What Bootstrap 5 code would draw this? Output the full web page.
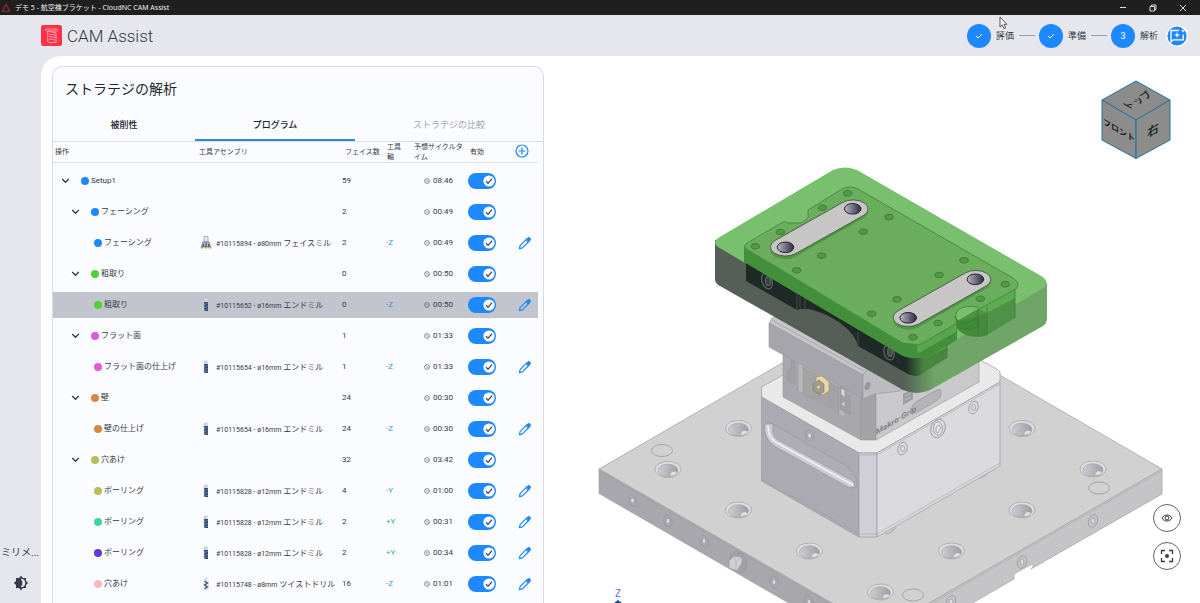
<!DOCTYPE html>
<html lang="ja">
<head>
<meta charset="utf-8">
<meta name="viewport" content="width=device-width, initial-scale=1">
<title>デモ 5 - 航空機ブラケット - CloudNC CAM Assist</title>
<link href="https://cdn.jsdelivr.net/npm/bootstrap@5.3.0/dist/css/bootstrap.min.css" rel="stylesheet">
<style>
  :root { --accent: #1e88ff; --ink: #353945; --line: #d8dce7; --shell: #e5e7ed; }
  body { font-family: Roboto, "Noto Sans CJK JP", sans-serif; color: var(--ink); background: var(--shell); font-size: 8px; line-height: 10px; }
  button { padding: 0; border: 0; background: none; color: inherit; }
  svg { display: block; flex: none; }
  .title-bar { height: 15px; background: #1f1f1f; color: #f2f2f2; font-family: "Noto Sans", "Noto Sans CJK JP", sans-serif; font-size: 7px; padding: 0 11px 0 1px; }
  .title-bar button { width: 10px; margin-left: 20px; }
  .app-header { height: 41px; padding: 0 12px 0 41px; }
  .app-name { font-size: 17px; line-height: 22px; font-weight: 300; color: #2f3440; margin-left: 5px; }
  .steps li { font-size: 9px; }
  .step-dot { width: 24px; height: 24px; border-radius: 50%; background: var(--accent); color: #fff; margin-right: 5px; }
  .step-rule { width: 16px; height: 1px; background: #9a9ea8; margin: 0 4px 0 5px; }
  .side-rail { width: 41px; padding-bottom: 12px; }
  .unit-label { font-size: 10px; line-height: 14px; padding-left: 1px; width: 41px; margin-bottom: 15px; white-space: nowrap; }
  .workspace { background: #fff; border-top-left-radius: 20px; padding: 10px 0 0 11px; }
  .ops-panel { width: 492px; background: #fbfcff; border: 1px solid var(--line); border-width: 1px 1px 0; border-radius: 10px 10px 0 0; }
  .ops-panel h1 { font-size: 14px; line-height: 20px; margin: 12px 12px 11px; font-weight: 400; color: #23262f; }
  .op-tabs { border-bottom: 1px solid var(--line); }
  .op-tabs button { height: 31px; font-size: 9px; font-weight: 500; color: #1d2029; border-bottom: 2px solid transparent; }
  .op-tabs .t1 { flex: 142; } .op-tabs .t2 { flex: 160; } .op-tabs .t3 { flex: 188; font-weight: 400; color: #a3a5ac; }
  .op-tabs .current { border-bottom-color: #2b87f0; }
  .ops-scroll { padding-right: 5px; }
  .ops { table-layout: fixed; width: 100%; border-collapse: separate; border-spacing: 0 5px; margin-top: -5px; }
  .ops th { height: 21px; padding: 0 0 0 6px; font-size: 7px; font-weight: 400; border-bottom: 1px solid var(--line); vertical-align: middle; }
  .ops th:first-child { padding-left: 2px; } .ops th:nth-child(2) { padding-left: 2px; }
  .ops th:nth-child(4) { padding-right: 6px; } .ops th:nth-child(5) { padding-left: 5px; }
  .ops td { height: 26px; padding: 0 0 0 3px; vertical-align: middle; white-space: nowrap; }
  .ops .picked td { background: #c3c5ce; }
  .lv0 { padding-left: 5px; } .lv1 { padding-left: 15px; } .lv2 { padding-left: 38px; }
  .twist { width: 9px; margin-right: 11px; }
  .dot { width: 8px; height: 8px; border-radius: 50%; margin-right: 2px; flex: none; }
  .tool { gap: 4px; padding-top: 1px; }
  .tool svg { margin-top: -2px; }
  .tool-code { font-size: 7px; margin-right: -2px; }
  .ops td.ax { padding-left: 5px; color: #3b8cf0; } .ops td.ax.y { color: #2fb67c; }
  .ops td.tm { padding-right: 11px; }
  .tm div { gap: 3px; }
  .form-check-input.op-switch { display: block; width: 28px; height: 16px; margin: 0 0 0 1px; border: 0; border-radius: 8px; background: #b9bdc8; }
  .form-check-input.op-switch:checked { background: var(--accent) url("data:image/svg+xml,%3Csvg xmlns='http://www.w3.org/2000/svg' viewBox='0 0 28 16'%3E%3Ccircle cx='21' cy='8' r='5.6' fill='%23fff'/%3E%3Cpath d='M18 8.2l2 2.1 4-4.6' fill='none' stroke='%2323406e' stroke-width='1.2'/%3E%3C/svg%3E") no-repeat center / 28px 16px; }
  .edit { display: block; margin-left: 6px; color: var(--accent); }
  .viewer svg.scene { width: 100%; height: 100%; }
  .view-cube { top: 14px; right: 29px; }
  .view-tools { right: 19px; bottom: 33px; gap: 10px; }
  .view-tools button { width: 28px; height: 28px; border-radius: 50%; border: 1px solid #5d626e; background: #fff; color: #353b4a; }
  .pointer { left: 999px; top: 16px; }
</style>
</head>
<body class="vh-100 overflow-hidden d-flex flex-column">

<svg width="0" height="0" class="position-absolute" aria-hidden="true">
  <symbol id="chev" viewBox="0 0 9 6"><path d="M1.2 1l3.3 3.3L7.8 1" fill="none" stroke="#343948" stroke-width="1.3"/></symbol>
  <symbol id="clock" viewBox="0 0 6 6"><circle cx="3" cy="3" r="2.400" fill="none" stroke="#5a5f6b" stroke-width=".7"/><path d="M1.600 1.800L3 3.200h1.400" fill="none" stroke="#5a5f6b" stroke-width=".6"/></symbol>
  <symbol id="pen" viewBox="0 0 14 14"><path d="M1.400 12.600l.7-3L9 2.700l2.300 2.300-6.900 6.900zM8 3.700L10.300 6" fill="none" stroke="currentColor" stroke-width="1.200" stroke-linejoin="round"/><path d="M9 2.700l1.100-1.100c.9-.9 3.200 1.400 2.300 2.300L11.300 5z" fill="currentColor" stroke="currentColor"/></symbol>
  <symbol id="endmill" viewBox="0 0 12 13"><path d="M4.200.5h3.600v4H4.200z" fill="#cfd5df"/><path d="M4 4h4v9H4z" fill="#2e4468"/><path d="M4 7l4-2M4 10l4-2M4 12.700l4-2" stroke="#7f90ab" stroke-width=".8"/><path d="M4 1v12" stroke="#b8c0cc" stroke-width=".6"/></symbol>
  <symbol id="drill" viewBox="0 0 12 13"><path d="M4.200.5h3.600v3H4.200z" fill="#dde1e8"/><path d="M4.500 4L7.500 6l-3 2 3 2-3 1.800" fill="none" stroke="#2e4468" stroke-width="1.300"/><path d="M4 3v9l2 1 2-1V3" fill="none" stroke="#a5b0c2" stroke-width=".5"/></symbol>
  <symbol id="facemill" viewBox="0 0 12 13"><path d="M4 .5h4V6H4z" fill="#e6e9ee" stroke="#8490a5" stroke-width=".7"/><path d="M3 6h6l1.500 5h-9z" fill="#b6bfce" stroke="#526584" stroke-width=".7"/><path d="M6 7v5M3.500 8L3 11M8.500 8l.5 3" stroke="#263b5c"/><path d="M.6 11.700h2.600M4.800 11.700h2.400M8.800 11.700h2.600" stroke="#d3ae2d" stroke-width="1.400"/></symbol>
  <symbol id="tick" viewBox="0 0 8 6"><path d="M1 3l2 2 4-4" fill="none" stroke="#fff" stroke-width="1"/></symbol>
</svg>

<div class="title-bar d-flex align-items-center flex-shrink-0">
  <svg width="10" height="10" viewBox="0 0 10 10" class="me-1"><path d="M5 1.200L8.800 8.300H1.200z" fill="none" stroke="#7a2731" stroke-width="1.500" stroke-linejoin="round"/></svg>
  <span class="me-auto">デモ 5 - 航空機ブラケット - CloudNC CAM Assist</span>
  <button type="button" aria-label="最小化"><svg width="8" height="8"><path d="M1 3.500h6" stroke="#ddd"/></svg></button>
  <button type="button" aria-label="元に戻す"><svg width="8" height="8"><path d="M1 2.500h4.500V7H1zM2.500 2.500V1H7v4.500H5.500" fill="none" stroke="#ddd"/></svg></button>
  <button type="button" aria-label="閉じる"><svg width="8" height="8"><path d="M1 1l6 6M7 1L1 7" stroke="#ddd"/></svg></button>
</div>

<header class="app-header d-flex align-items-center flex-shrink-0">
  <svg width="21" height="21" viewBox="0 0 21 21"><rect width="21" height="21" rx="2.500" fill="#fb3349"/><path d="M5.500 4h10c1.500 0 1.500 2 0 2h-9c-2.500 0-2.500-2-1-2zM6.800 6v10.500M8 6.200l7 1.800v9.500H8.500c-1.700 0-2-1.200-1.700-2M8 9.200l7 1M8 11.500l7 1M8 14l6 1" fill="none" stroke="#ff9da8" stroke-width="1"/></svg>
  <span class="app-name me-auto">CAM Assist</span>
  <ol class="steps list-unstyled d-flex align-items-center mb-0">
    <li class="d-flex align-items-center"><span class="step-dot d-flex align-items-center justify-content-center"><svg width="8" height="6"><use href="#tick"/></svg></span>評価<span class="step-rule"></span></li>
    <li class="d-flex align-items-center"><span class="step-dot d-flex align-items-center justify-content-center"><svg width="8" height="6"><use href="#tick"/></svg></span>準備<span class="step-rule"></span></li>
    <li class="d-flex align-items-center"><span class="step-dot d-flex align-items-center justify-content-center">3</span>解析</li>
  </ol>
  <button type="button" class="ms-2" aria-label="フィードバック"><svg width="22" height="22" viewBox="0 0 22 22"><circle cx="11" cy="11" r="10.200" fill="var(--accent)" stroke="#fff" stroke-width="1.200"/><path d="M13 5.500H5v11.500l2.200-2.200h10V9.500" fill="none" stroke="#fff" stroke-width="1.300"/><path d="M11 7l.8 2.200 2.200.8-2.200.8-.8 2.200-.8-2.200L8 10l2.200-.8zM17 3.800l.6 1.400 1.400.6-1.400.6-.6 1.400-.6-1.400-1.400-.6 1.400-.6z" fill="#fff"/></svg></button>
</header>
<svg class="pointer position-absolute" width="9" height="14" viewBox="0 0 9 14" aria-hidden="true"><path d="M1 1v10l2.300-2.200L5 12.700l1.700-.7-1.600-3.700H8z" fill="#fff" stroke="#333" stroke-width=".8"/></svg>

<div class="d-flex flex-grow-1 overflow-hidden">
  <aside class="side-rail d-flex flex-column justify-content-end align-items-center flex-shrink-0">
    <div class="unit-label">ミリメ...</div>
    <button type="button" aria-label="テーマ"><svg width="16" height="16" viewBox="0 0 16 16"><path d="M8 .8l2 2.300h3v3L15.200 8 13 10v3h-3l-2 2.200L6 13H3v-3L.8 8 3 6V3.100h3z" fill="#363c4b"/><path d="M8 4a4 4 0 0 1 0 8c2.200-2 2.200-6 0-8z" fill="#e5e7ed" stroke="#e5e7ed" stroke-width=".6"/></svg></button>
  </aside>

  <main class="workspace d-flex flex-grow-1 overflow-hidden">
    <section class="ops-panel flex-shrink-0">
      <h1>ストラテジの解析</h1>
      <nav class="op-tabs d-flex">
        <button type="button" class="t1">被削性</button><button type="button" class="t2 current" aria-current="page">プログラム</button><button type="button" class="t3">ストラテジの比較</button>
      </nav>
      <div class="ops-scroll">
      <table class="ops">
        <colgroup><col style="width:144px"><col style="width:142px"><col style="width:42px"><col style="width:28px"><col style="width:55px"><col style="width:45px"><col></colgroup>
        <thead><tr><th>操作</th><th>工具アセンブリ</th><th>フェイス数</th><th>工具軸</th><th>予想サイクルタイム</th><th>有効</th><th><button type="button" aria-label="追加"><svg width="14" height="14" viewBox="0 0 14 14"><path d="M7 3.500v7M3.500 7h7M13 7A6 6 0 1 1 1 7a6 6 0 0 1 12 0z" fill="none" stroke="#1e88ff" stroke-width="1.200"/></svg></button></th></tr></thead>
        <tbody>
        <tr><td><div class="lv0 d-flex align-items-center"><button type="button" class="twist" aria-label="折りたたむ"><svg width="9" height="6"><use href="#chev"/></svg></button><span class="dot" style="background:#1e88ff"></span>Setup1</div></td><td></td><td>59</td><td></td><td class="tm"><div class="d-flex align-items-center justify-content-end"><svg width="6" height="6"><use href="#clock"/></svg>08:46</div></td><td><input type="checkbox" role="switch" class="form-check-input op-switch" aria-label="有効" checked></td><td></td></tr>
        <tr><td><div class="lv1 d-flex align-items-center"><button type="button" class="twist" aria-label="折りたたむ"><svg width="9" height="6"><use href="#chev"/></svg></button><span class="dot" style="background:#1e88ff"></span>フェーシング</div></td><td></td><td>2</td><td></td><td class="tm"><div class="d-flex align-items-center justify-content-end"><svg width="6" height="6"><use href="#clock"/></svg>00:49</div></td><td><input type="checkbox" role="switch" class="form-check-input op-switch" aria-label="有効" checked></td><td></td></tr>
        <tr><td><div class="lv2 d-flex align-items-center"><span class="dot" style="background:#1e88ff"></span>フェーシング</div></td><td><div class="tool d-flex align-items-center"><svg width="12" height="13"><use href="#facemill"/></svg><span class="tool-code">#10115894 - ø80mm</span> フェイスミル</div></td><td>2</td><td class="ax">-Z</td><td class="tm"><div class="d-flex align-items-center justify-content-end"><svg width="6" height="6"><use href="#clock"/></svg>00:49</div></td><td><input type="checkbox" role="switch" class="form-check-input op-switch" aria-label="有効" checked></td><td><button type="button" class="edit" aria-label="編集"><svg width="14" height="14"><use href="#pen"/></svg></button></td></tr>
        <tr><td><div class="lv1 d-flex align-items-center"><button type="button" class="twist" aria-label="折りたたむ"><svg width="9" height="6"><use href="#chev"/></svg></button><span class="dot" style="background:#4cd335"></span>粗取り</div></td><td></td><td>0</td><td></td><td class="tm"><div class="d-flex align-items-center justify-content-end"><svg width="6" height="6"><use href="#clock"/></svg>00:50</div></td><td><input type="checkbox" role="switch" class="form-check-input op-switch" aria-label="有効" checked></td><td></td></tr>
        <tr class="picked"><td><div class="lv2 d-flex align-items-center"><span class="dot" style="background:#4cd335"></span>粗取り</div></td><td><div class="tool d-flex align-items-center"><svg width="12" height="13"><use href="#endmill"/></svg><span class="tool-code">#10115652 - ø16mm</span> エンドミル</div></td><td>0</td><td class="ax">-Z</td><td class="tm"><div class="d-flex align-items-center justify-content-end"><svg width="6" height="6"><use href="#clock"/></svg>00:50</div></td><td><input type="checkbox" role="switch" class="form-check-input op-switch" aria-label="有効" checked></td><td><button type="button" class="edit" aria-label="編集"><svg width="14" height="14"><use href="#pen"/></svg></button></td></tr>
        <tr><td><div class="lv1 d-flex align-items-center"><button type="button" class="twist" aria-label="折りたたむ"><svg width="9" height="6"><use href="#chev"/></svg></button><span class="dot" style="background:#df5bdc"></span>フラット面</div></td><td></td><td>1</td><td></td><td class="tm"><div class="d-flex align-items-center justify-content-end"><svg width="6" height="6"><use href="#clock"/></svg>01:33</div></td><td><input type="checkbox" role="switch" class="form-check-input op-switch" aria-label="有効" checked></td><td></td></tr>
        <tr><td><div class="lv2 d-flex align-items-center"><span class="dot" style="background:#df5bdc"></span>フラット面の仕上げ</div></td><td><div class="tool d-flex align-items-center"><svg width="12" height="13"><use href="#endmill"/></svg><span class="tool-code">#10115654 - ø16mm</span> エンドミル</div></td><td>1</td><td class="ax">-Z</td><td class="tm"><div class="d-flex align-items-center justify-content-end"><svg width="6" height="6"><use href="#clock"/></svg>01:33</div></td><td><input type="checkbox" role="switch" class="form-check-input op-switch" aria-label="有効" checked></td><td><button type="button" class="edit" aria-label="編集"><svg width="14" height="14"><use href="#pen"/></svg></button></td></tr>
        <tr><td><div class="lv1 d-flex align-items-center"><button type="button" class="twist" aria-label="折りたたむ"><svg width="9" height="6"><use href="#chev"/></svg></button><span class="dot" style="background:#d68a40"></span>壁</div></td><td></td><td>24</td><td></td><td class="tm"><div class="d-flex align-items-center justify-content-end"><svg width="6" height="6"><use href="#clock"/></svg>00:30</div></td><td><input type="checkbox" role="switch" class="form-check-input op-switch" aria-label="有効" checked></td><td></td></tr>
        <tr><td><div class="lv2 d-flex align-items-center"><span class="dot" style="background:#d68a40"></span>壁の仕上げ</div></td><td><div class="tool d-flex align-items-center"><svg width="12" height="13"><use href="#endmill"/></svg><span class="tool-code">#10115654 - ø16mm</span> エンドミル</div></td><td>24</td><td class="ax">-Z</td><td class="tm"><div class="d-flex align-items-center justify-content-end"><svg width="6" height="6"><use href="#clock"/></svg>00:30</div></td><td><input type="checkbox" role="switch" class="form-check-input op-switch" aria-label="有効" checked></td><td><button type="button" class="edit" aria-label="編集"><svg width="14" height="14"><use href="#pen"/></svg></button></td></tr>
        <tr><td><div class="lv1 d-flex align-items-center"><button type="button" class="twist" aria-label="折りたたむ"><svg width="9" height="6"><use href="#chev"/></svg></button><span class="dot" style="background:#b9bd5c"></span>穴あけ</div></td><td></td><td>32</td><td></td><td class="tm"><div class="d-flex align-items-center justify-content-end"><svg width="6" height="6"><use href="#clock"/></svg>03:42</div></td><td><input type="checkbox" role="switch" class="form-check-input op-switch" aria-label="有効" checked></td><td></td></tr>
        <tr><td><div class="lv2 d-flex align-items-center"><span class="dot" style="background:#b9bd5c"></span>ボーリング</div></td><td><div class="tool d-flex align-items-center"><svg width="12" height="13"><use href="#endmill"/></svg><span class="tool-code">#10115828 - ø12mm</span> エンドミル</div></td><td>4</td><td class="ax y">-Y</td><td class="tm"><div class="d-flex align-items-center justify-content-end"><svg width="6" height="6"><use href="#clock"/></svg>01:00</div></td><td><input type="checkbox" role="switch" class="form-check-input op-switch" aria-label="有効" checked></td><td><button type="button" class="edit" aria-label="編集"><svg width="14" height="14"><use href="#pen"/></svg></button></td></tr>
        <tr><td><div class="lv2 d-flex align-items-center"><span class="dot" style="background:#40d6a0"></span>ボーリング</div></td><td><div class="tool d-flex align-items-center"><svg width="12" height="13"><use href="#endmill"/></svg><span class="tool-code">#10115828 - ø12mm</span> エンドミル</div></td><td>2</td><td class="ax y">+Y</td><td class="tm"><div class="d-flex align-items-center justify-content-end"><svg width="6" height="6"><use href="#clock"/></svg>00:31</div></td><td><input type="checkbox" role="switch" class="form-check-input op-switch" aria-label="有効" checked></td><td><button type="button" class="edit" aria-label="編集"><svg width="14" height="14"><use href="#pen"/></svg></button></td></tr>
        <tr><td><div class="lv2 d-flex align-items-center"><span class="dot" style="background:#5c3bd6"></span>ボーリング</div></td><td><div class="tool d-flex align-items-center"><svg width="12" height="13"><use href="#endmill"/></svg><span class="tool-code">#10115828 - ø12mm</span> エンドミル</div></td><td>2</td><td class="ax y">+Y</td><td class="tm"><div class="d-flex align-items-center justify-content-end"><svg width="6" height="6"><use href="#clock"/></svg>00:34</div></td><td><input type="checkbox" role="switch" class="form-check-input op-switch" aria-label="有効" checked></td><td><button type="button" class="edit" aria-label="編集"><svg width="14" height="14"><use href="#pen"/></svg></button></td></tr>
        <tr><td><div class="lv2 d-flex align-items-center"><span class="dot" style="background:#f2bcc0"></span>穴あけ</div></td><td><div class="tool d-flex align-items-center"><svg width="12" height="13"><use href="#drill"/></svg><span class="tool-code">#10115748 - ø8mm</span> ツイストドリル</div></td><td>16</td><td class="ax">-Z</td><td class="tm"><div class="d-flex align-items-center justify-content-end"><svg width="6" height="6"><use href="#clock"/></svg>01:01</div></td><td><input type="checkbox" role="switch" class="form-check-input op-switch" aria-label="有効" checked></td><td><button type="button" class="edit" aria-label="編集"><svg width="14" height="14"><use href="#pen"/></svg></button></td></tr>
        </tbody>
      </table>
      </div>
    </section>

    <section class="viewer position-relative flex-grow-1 overflow-hidden">
      <svg class="scene" viewBox="544 66 656 537" preserveAspectRatio="xMidYMid slice">
        <defs>
          <linearGradient id="bore"><stop offset="0" stop-color="#b8b7c8"/><stop offset="1" stop-color="#2c2b45"/></linearGradient>
          <linearGradient id="pit"><stop offset="0" stop-color="#cdcdd4"/><stop offset="1" stop-color="#9c9ca5"/></linearGradient>
          <linearGradient id="rim" x1="903" x2="935" gradientUnits="userSpaceOnUse"><stop offset="0" stop-color="#555f57"/><stop offset="1" stop-color="#70a468"/></linearGradient>
          <linearGradient id="nook" x1="906" x2="924" gradientUnits="userSpaceOnUse"><stop offset="0" stop-color="#1f2a28"/><stop offset="1" stop-color="#47873f"/></linearGradient>
          <g id="socket"><ellipse rx="13" ry="8" fill="#dedee2" stroke="#9d9da0" stroke-width=".7"/><ellipse cy="1" rx="10" ry="6.300" fill="url(#pit)" stroke="#9d9da0" stroke-width=".6"/><path d="M2 6.500c0-4 4-6 7-3.500-1 2-3 3.500-7 3.500z" fill="#e1e1e4" stroke="#aaa" stroke-width=".4"/></g>
          <g id="bolt" fill="none" stroke="#939398" stroke-width=".6"><ellipse rx="4" ry="6" transform="rotate(-20)"/><ellipse rx="1.800" ry="2.500" fill="#ddd"/></g>
          <g id="boltr" fill="none" stroke="#98989c" stroke-width=".8"><ellipse rx="4.500" ry="6.500" transform="rotate(20)"/><ellipse rx="2" ry="3" fill="#ddd"/></g>
          <ellipse id="pin" rx="4.200" ry="2.700"/>
          <g id="slot"><path d="M775 243L842.700 205 863.500 218 796 256.500A15 9 0 0 1 770.500 250z" fill="#4e9944"/><path d="M863.300 215.600A15 9 0 0 0 868 209v3.500q-1 4-4.700 6z" fill="#4e9944"/><path d="M775.200 240.400L842.700 202.400A15 9 0 0 1 863.300 215.600L795.800 253.600A15 9 0 0 1 775.200 240.400z" fill="#c7c5c5" stroke="#3b4a39" stroke-width=".8"/><ellipse cx="785.500" cy="247.300" rx="8.300" ry="5.300" fill="url(#bore)" stroke="#222"/><ellipse cx="852.700" cy="208.800" rx="8.300" ry="5.300" fill="url(#bore)" stroke="#222"/></g>
        </defs>
        <!-- base plate -->
        <g stroke="#a8a8aa" stroke-width=".8" stroke-linejoin="round">
          <path d="M599 469L880.500 306 1162 469 880.500 631z" fill="#d1d1d1"/>
          <path d="M599 469L880.500 631v25L599 493.500z" fill="#a8a7ad"/>
          <path d="M1162 469L880.500 631v25L1014 579v-5l17-9.500 3 1-3 3.500 131-75z" fill="#c5c5c8"/>
          <path d="M599 471L880.500 633 1162 471" fill="none" stroke="#999" stroke-width=".4"/>
          <g fill="none" stroke="#9b9b9d"><ellipse cx="662" cy="450.500" rx="10.500" ry="6"/><ellipse cx="1099" cy="488" rx="10.500" ry="6"/><ellipse cx="913" cy="595" rx="10.500" ry="6"/></g>
        </g>
        <use href="#socket" x="738.500" y="428.500"/><use href="#socket" x="668" y="469.500"/><use href="#socket" x="738.500" y="510"/><use href="#socket" x="809.500" y="551"/><use href="#socket" x="880.500" y="592"/><use href="#socket" x="1022" y="428.500"/><use href="#socket" x="1093" y="469"/><use href="#socket" x="1022" y="510"/><use href="#socket" x="951.500" y="551"/>
        <use href="#bolt" x="632.500" y="500.500"/><use href="#bolt" x="668" y="521"/><use href="#bolt" x="704" y="541"/><use href="#bolt" x="774" y="582"/><use href="#bolt" x="809" y="602"/>
        <use href="#boltr" x="1093" y="521"/><use href="#boltr" x="1022" y="562"/><use href="#boltr" x="951" y="602"/>
        <ellipse cx="738.500" cy="562" rx="8" ry="11" transform="rotate(-25 738.500 562)" fill="#a2a1a7" stroke="#939398" stroke-width=".6"/>
        <path d="M729 561l5-5 8 1v6l-5 8-8-3z" fill="#d0d0d4" stroke="#939398" stroke-width=".6"/><path d="M734 556l2 6 6-5M736 562v8" fill="none" stroke="#a5a5a9" stroke-width=".6"/>
        <!-- vise body -->
        <path d="M979 478q6 0 10-7M885 534q8 0 11-7" fill="#c2c2c5" stroke="#a3a3a3" stroke-width=".7"/>
        <g stroke="#9c9ca1" stroke-width=".7" stroke-linejoin="round">
          <path d="M761.500 387L783 375 880 340 980 360 997 369 1000 372v10L877 453h-18L761.500 397z" fill="#e9e9e9"/>
          <path d="M761.500 397L859 453v84L761.500 481z" fill="#abaab3"/>
          <path d="M859 453h18v84h-18z" fill="#cfced9"/>
          <path d="M877 453L1000 382v84L877 537z" fill="#dad9de"/>
          <path d="M761.500 479L859 534h18L1000 463M859 455h18L1000 384" fill="none" stroke-width=".5"/>
        </g>
        <path d="M764 428c0-6 4-7 9-4l70 40c9 5 14 13 14 19 0 5-4 6-8 4l-76-43c-6-4-9-10-9-16z" fill="#aeadb6" stroke="#97979f" stroke-width=".7"/>
        <path d="M765 424c-2 10 3 18 11 23l72 40c7 2 8-2 5-6l-73-40c-7-3-8-8-7-17z" fill="#cdccd5" stroke="#94949b" stroke-width=".6"/>
        <path d="M768 426c0 9 4 15 11 18l74 41" fill="none" stroke="#f0f0f4" stroke-width="1.500"/>
        <use href="#bolt" x="809.500" y="435.500"/>
        <use href="#boltr" x="902.500" y="448.500"/><use href="#boltr" x="973.500" y="407.500"/>
        <g fill="none" stroke="#96969b" stroke-width=".8"><ellipse cx="938" cy="428.500" rx="7" ry="9.500" transform="rotate(20 938 428.500)"/><ellipse cx="938" cy="428.500" rx="4.500" ry="6.500" fill="#e6e6e9"/><path d="M936 427l3-2 2 3-3 5-2-1z"/></g>
        <!-- vise carriage -->
        <g stroke="#97979c" stroke-width=".6" stroke-linejoin="round">
          <path d="M783 350l78 40v50L783 397z" fill="#a8a7ad"/>
          <path d="M861 385h15v55h-15z" fill="#a2a3a5"/>
          <path d="M876 385l103-40v37L876 440z" fill="#c9c9cc"/>
          <path d="M798 362l47 26v30l-47-27z" fill="#b7b6b8"/><path d="M803 367l36 20v26l-36-20z" fill="#a3a2a4"/>
          <path d="M791 356v12l-4 3v9l8 5v-26M840 386v23l10 6v-19l-5-2v-6z" fill="#a09fa5"/>
          <path d="M841 388l4 2v7l-4-2zM841 404l4-3v6z" fill="#d2d2d5"/>
        </g>
        <path d="M816 377l6-1 7 6v9l-6 4-7-6z" fill="#ead7a8" stroke="#9a8a67" stroke-width=".6"/><path d="M813 384l6-4 5 4v8l-5 2-6-4z" fill="#a19a8b" stroke="#7e796e" stroke-width=".6"/><circle cx="818.500" cy="387" r="1.500" fill="#e8cf91"/>
        <path d="M912 411c-1-7 4-9 9-12l12-7c6-3 8-4 8 1 0 5-4 8-10 11l-12 7c-3 2-6 3-7 0z" fill="#b5b5b7" stroke="#939396" stroke-width=".7"/>
        <path d="M903 394l10-5v10l-10 6z" fill="#9d9da1"/><path d="M905 396l6-3M905 400l6-3" stroke="#ccc" stroke-width=".8"/>
        <text transform="translate(876 435) skewY(-31)" font-size="8" font-weight="700" fill="#828286">Makro·Grip</text>
        <g stroke="#95959a" stroke-width=".6" stroke-linejoin="round">
          <path d="M769 323l3-5 5-1 92 50-6 8z" fill="#c4c4c9"/><path d="M772 320l92 51" fill="none"/>
          <path d="M769 323l94 52v23l-94-51z" fill="#a6a5ab"/>
          <path d="M863 375l5-7 42 15-10 8-26 3-11 5z" fill="#bcbcc0"/>
          <ellipse cx="867.500" cy="386" rx="2.300" ry="4" transform="rotate(20 867.500 386)" fill="#96969b"/>
        </g>
        <!-- stock -->
        <path d="M715 240v40q1 4 5 6l183 104q14 6 27 0l113-64q4-3 4-8v-35z" fill="url(#rim)"/>
        <path d="M833 170q12-5 24 0l186 107q6 5 2 10L930 355q-14 6-27 1L718 247q-6-5 0-9z" fill="#78c06e"/>
        <!-- bracket inside the stock -->
        <path d="M746 262v19l51 29c8-3 16 0 25 3 14 6 33 18 36 33l50 28q5 2 12 1v-17l-17-3z" fill="#1f2a28"/>
        <path d="M797 294v16M800 296v14M805 298v12M858 332v14" stroke="#46514b" stroke-width=".9"/>
        <path d="M903 356q14 5 27 0l17-9v11l-27 17q-6 2-12-1z" fill="url(#nook)"/>
        <path d="M955 322c0 12 20 18 32 13l28-17V289l-37 20z" fill="#4f9147"/>
        <path d="M955 322c0 12 20 18 32 13v-22z" fill="#468a3d"/>
        <path d="M987 313l28-15v-9l-37 20z" fill="#5bab50"/>
        <path d="M978 309v27M987 307v28M1015 289v29M920 344v31M947 330v28" stroke="#3b7a34" stroke-width=".7"/>
        <path d="M744 247v15L903 356q14 5 27 0l27-16v-17l-37 20z" fill="#448f3b"/>
        <path d="M917 344l3-1 37-20v9l-37 21h-9z" fill="#57a54c" stroke="#3e8236" stroke-width=".6"/>
        <path d="M747 243l36-21q3-1 5 1h13l7-5v-8l34-21q7-4 16 0l155 89q8 6 3 11l-37 20c-2-4-22-4-23 5-1 3 1 6 3 8l-38 22q-8 3-17 0L747 251q-5-4 0-8z" fill="#6aae5d" stroke="#3e8435" stroke-width=".8"/>
        <path d="M955 316c1 9 14 8 23 1v10c-8 4-14 2-20 0z" fill="#3e8a36" stroke="#357a2e" stroke-width=".6"/>
        <g fill="none" stroke="#59635e" stroke-width="1.300"><ellipse cx="767" cy="281" rx="5" ry="8" transform="rotate(-18 767 281)"/><ellipse cx="768" cy="281" rx="2.500" ry="4.500" fill="#39443f"/><ellipse cx="889" cy="352.500" rx="5" ry="7.500" transform="rotate(-18 889 352.500)"/><ellipse cx="890" cy="352" rx="2.500" ry="4.500" fill="#46514c"/></g>
        <path d="M715 247l3 1 185 108 14 2v-14L903 343 744 250v12z" fill="#448f3b" opacity="0"/>
        <path d="M744 247v15L903 356l14 2v-14L903 343z" fill="#448f3b"/>
        <g fill="#55964b" stroke="#34752d" stroke-width=".8"><use href="#pin" x="847.700" y="193.300"/><use href="#pin" x="822.300" y="207.700"/><use href="#pin" x="780.300" y="232"/><use href="#pin" x="755.300" y="246.300"/><use href="#pin" x="889" y="217"/><use href="#pin" x="863.300" y="231.700"/><use href="#pin" x="821.700" y="255.700"/><use href="#pin" x="796.700" y="270.300"/><use href="#pin" x="964" y="260.300"/><use href="#pin" x="939" y="275"/><use href="#pin" x="897" y="299.300"/><use href="#pin" x="871.700" y="313.700"/><use href="#pin" x="1005.300" y="284.300"/><use href="#pin" x="980.300" y="298.700"/><use href="#pin" x="938" y="323"/><use href="#pin" x="913" y="337.300"/></g>
        <use href="#slot"/><use href="#slot" x="122.700" y="70.500"/>
        <!-- axis marker -->
        <text x="615" y="597" font-size="10" fill="#4a74d8">Z</text><path d="M614 603l4-3 4 3z" fill="#24479c"/>
      </svg>

      <svg class="view-cube position-absolute" width="70" height="80" viewBox="1101 80 70 80">
        <g fill="#8c8c8c" stroke="#22739b" stroke-width="1"><path d="M1136 81l34 19-34 20-34-20z"/><path d="M1102 100l34 20v38.500L1102 140z"/><path d="M1170 100l-34 20v38.500l34-18.500z"/></g>
        <g fill="#1c1c1c" font-size="8" font-weight="700">
          <text transform="translate(1103 124) skewY(30)">フロント</text>
          <text transform="translate(1147 138) skewY(-30)" font-size="12" font-weight="500">右</text>
          <text transform="translate(1128 110) rotate(-30) skewX(30)" font-size="10" font-weight="500">トップ</text>
        </g>
      </svg>
      <div class="view-tools position-absolute d-flex flex-column">
        <button type="button" class="d-flex align-items-center justify-content-center" aria-label="表示"><svg width="12" height="10" viewBox="0 0 12 10"><path d="M1 5c2-4 8-4 10 0-2 4-8 4-10 0z" fill="none" stroke="currentColor"/><circle cx="6" cy="5" r="1.900" fill="none" stroke="currentColor"/></svg></button>
        <button type="button" class="d-flex align-items-center justify-content-center" aria-label="全体表示"><svg width="14" height="14" viewBox="0 0 14 14"><path d="M1.500 5V1.500H5M9 1.500h3.500V5M12.500 9v3.500H9M5 12.500H1.500V9" fill="none" stroke="currentColor" stroke-width="1.300"/><circle cx="7" cy="7" r="2" fill="currentColor"/></svg></button>
      </div>
    </section>
  </main>
</div>
<script src="https://cdn.jsdelivr.net/npm/bootstrap@5.3.0/dist/js/bootstrap.bundle.min.js"></script>
</body>
</html>
